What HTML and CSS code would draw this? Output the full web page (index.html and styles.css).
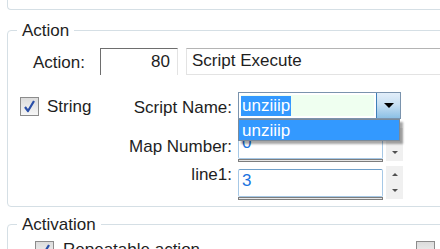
FILE: index.html
```html
<!DOCTYPE html>
<html lang="en">
<head>
  <meta charset="UTF-8">
  <title>Action Editor</title>
  <link rel="stylesheet" href="styles.css">
</head>
<body>

  <div class="group-top"></div>

  <fieldset class="group">
    <legend>Action</legend>

    <div class="row row-action">
      <span class="label label-action">Action:</span>
      <div class="num-box">80</div>
      <div class="text-box">Script Execute</div>
    </div>

    <div class="row row-script">
      <div class="label-col">
        <span class="check checked"><svg width="13" height="13" viewBox="0 0 13 13"><path d="M2 7 L5 11 L11 1" fill="none" stroke="#2a4fa8" stroke-width="2.2" stroke-linejoin="round"/></svg></span>
        <span class="check-text">String</span>
        <span class="label label-right">Script Name:</span>
      </div>
      <div class="combo">
        <div class="combo-field"><span class="selected">unziiip</span></div>
        <div class="combo-btn"><span class="arrow"></span></div>
        <div class="combo-list">unziiip</div>
      </div>
    </div>

    <div class="row spin-row">
      <div class="label-col"><span class="label label-map">Map Number:</span></div>
      <div class="spin-field">
        <div class="spin-input">0</div>
        <div class="spin-bar"></div>
      </div>
      <div class="spin-btns"><span class="up"></span><span class="down"></span></div>
    </div>

    <div class="row spin-row">
      <div class="label-col"><span class="label label-line">line1:</span></div>
      <div class="spin-field">
        <div class="spin-input">3</div>
        <div class="spin-bar"></div>
      </div>
      <div class="spin-btns"><span class="up"></span><span class="down"></span></div>
    </div>
  </fieldset>

  <fieldset class="group group-activation">
    <legend>Activation</legend>
    <div class="row row-repeat">
      <span class="check checked"><svg width="13" height="13" viewBox="0 0 13 13"><path d="M2 7 L5 11 L11 1" fill="none" stroke="#2a4fa8" stroke-width="2.2" stroke-linejoin="round"/></svg></span>
      <span class="check-text">Repeatable action</span>
      <span class="check plain"></span>
    </div>
  </fieldset>

</body>
</html>
```

FILE: styles.css
```css
html {
  overflow: hidden;
}
body {
  font-family: 'Liberation Sans', Arial, sans-serif;
  font-size: 17px;
  color: #1e1e1e;
  background-color: #ffffff;
  margin: 0;
  padding: 0;
  overflow: hidden;
  width: 440px;
  height: 249px;
}
.group-top {
  height: 9px;
  margin-left: 7px;
  margin-right: -10px;
  border-left: 1px solid #d5dfe5;
  border-bottom: 1px solid #d5dfe5;
  border-bottom-left-radius: 4px;
}
.group {
  margin: 10px -20px 0 7px;
  padding: 0 0 6px 0;
  border: 1px solid #d5dfe5;
  border-radius: 4px;
  min-width: 0;
}
.group legend {
  margin-left: 9px;
  padding: 0 5px;
  line-height: 21px;
  font-size: 17px;
  color: #1e1e1e;
}
.row {
  display: flex;
  align-items: flex-start;
}
.label {
  white-space: nowrap;
}

/* action row */
.row-action {
  margin-top: 7px;
  height: 27px;
}
.label-action {
  width: 67px;
  padding-left: 25px;
  margin-top: 5px;
}
.num-box {
  width: 69px;
  height: 23px;
  padding-top: 3px;
  padding-right: 7px;
  text-align: right;
  border-top: 1px solid #6e6e6e;
  border-left: 1px solid #6e6e6e;
  border-right: 1px solid #e3e3e3;
}
.text-box {
  flex: 1;
  margin-left: 8px;
  height: 23px;
  padding-top: 2px;
  padding-left: 5px;
  border: 1px solid #e3e3e3;
  border-top-color: #b4b4b4;
}

/* script row */
.row-script {
  margin-top: 17px;
  height: 26px;
}
.label-col {
  width: 224px;
  margin-right: 6px;
  display: flex;
  align-items: flex-start;
  justify-content: flex-end;
  flex-shrink: 0;
}
.row-script .label-col {
  justify-content: flex-start;
}
.check {
  width: 17px;
  height: 17px;
  border: 1px solid #8c8c8c;
  background: linear-gradient(#dcdcdc, #f6f6f6);
  display: flex;
  align-items: center;
  justify-content: center;
  flex-shrink: 0;
}
.row-script .check {
  margin-left: 12px;
  margin-top: 5px;
}
.check-text {
  margin-left: 8px;
  margin-top: 5px;
  white-space: nowrap;
}
.label-right {
  margin-left: auto;
  margin-top: 6px;
}
.combo {
  position: relative;
  width: 163px;
  height: 27px;
  display: flex;
  border: 1px solid #7a93ad;
  box-sizing: border-box;
}
.combo-field {
  flex: 1;
  margin: 2px;
  background-color: #effff0;
  display: flex;
  align-items: center;
}
.selected {
  background-color: #3399ff;
  color: #ffffff;
  padding: 0 1px;
  line-height: 20px;
}
.combo-btn {
  width: 23px;
  border-left: 1px solid #3e7fb8;
  background: linear-gradient(#e2eef9, #c9e0f3 45%, #8cc0e6);
  display: flex;
  align-items: center;
  justify-content: center;
}
.arrow {
  width: 0;
  height: 0;
  border-left: 5px solid transparent;
  border-right: 5px solid transparent;
  border-top: 5px solid #000000;
}
.combo-list {
  position: absolute;
  left: -1px;
  top: 26px;
  width: 162px;
  height: 22px;
  line-height: 21px;
  padding-left: 3px;
  box-sizing: border-box;
  background-color: #3399ff;
  color: #ffffff;
  border: 1px solid #7b8a99;
  box-shadow: 3px 3px 2px rgba(0, 0, 0, 0.35);
  z-index: 2;
}

/* spin rows */
.spin-row {
  margin-top: 10px;
  height: 34px;
}
.spin-row + .spin-row {
  margin-top: 4px;
}
.label-map {
  margin-top: 9px;
}
.label-line {
  margin-top: -1px;
}
.spin-field {
  width: 145px;
  margin-top: 3px;
}
.spin-input {
  height: 26px;
  line-height: 22px;
  border: 1px solid #a6c8e6;
  border-top-color: #6f9fc9;
  border-radius: 2px;
  padding-left: 3px;
  color: #1a73e0;
}
.spin-bar {
  height: 1px;
  border: 1px solid #7d7d7d;
  background-color: #e6e6e6;
}
.spin-btns {
  width: 17px;
  height: 33px;
  margin-left: 3px;
  background-color: #f0f0f0;
  display: flex;
  flex-direction: column;
  align-items: center;
  justify-content: space-around;
}
.up, .down {
  width: 0;
  height: 0;
  border-left: 3px solid transparent;
  border-right: 3px solid transparent;
}
.up {
  border-bottom: 3px solid #505050;
}
.down {
  border-top: 3px solid #505050;
}

/* activation */
.group-activation {
  margin-top: 7px;
  height: 50px;
}
.row-repeat {
  margin-top: 5px;
  align-items: center;
}
.row-repeat .check {
  margin-left: 27px;
}
.row-repeat .check-text {
  margin-left: 9px;
  margin-top: 0;
}
.check.plain {
  margin-left: auto;
  margin-right: 24px;
}
```
